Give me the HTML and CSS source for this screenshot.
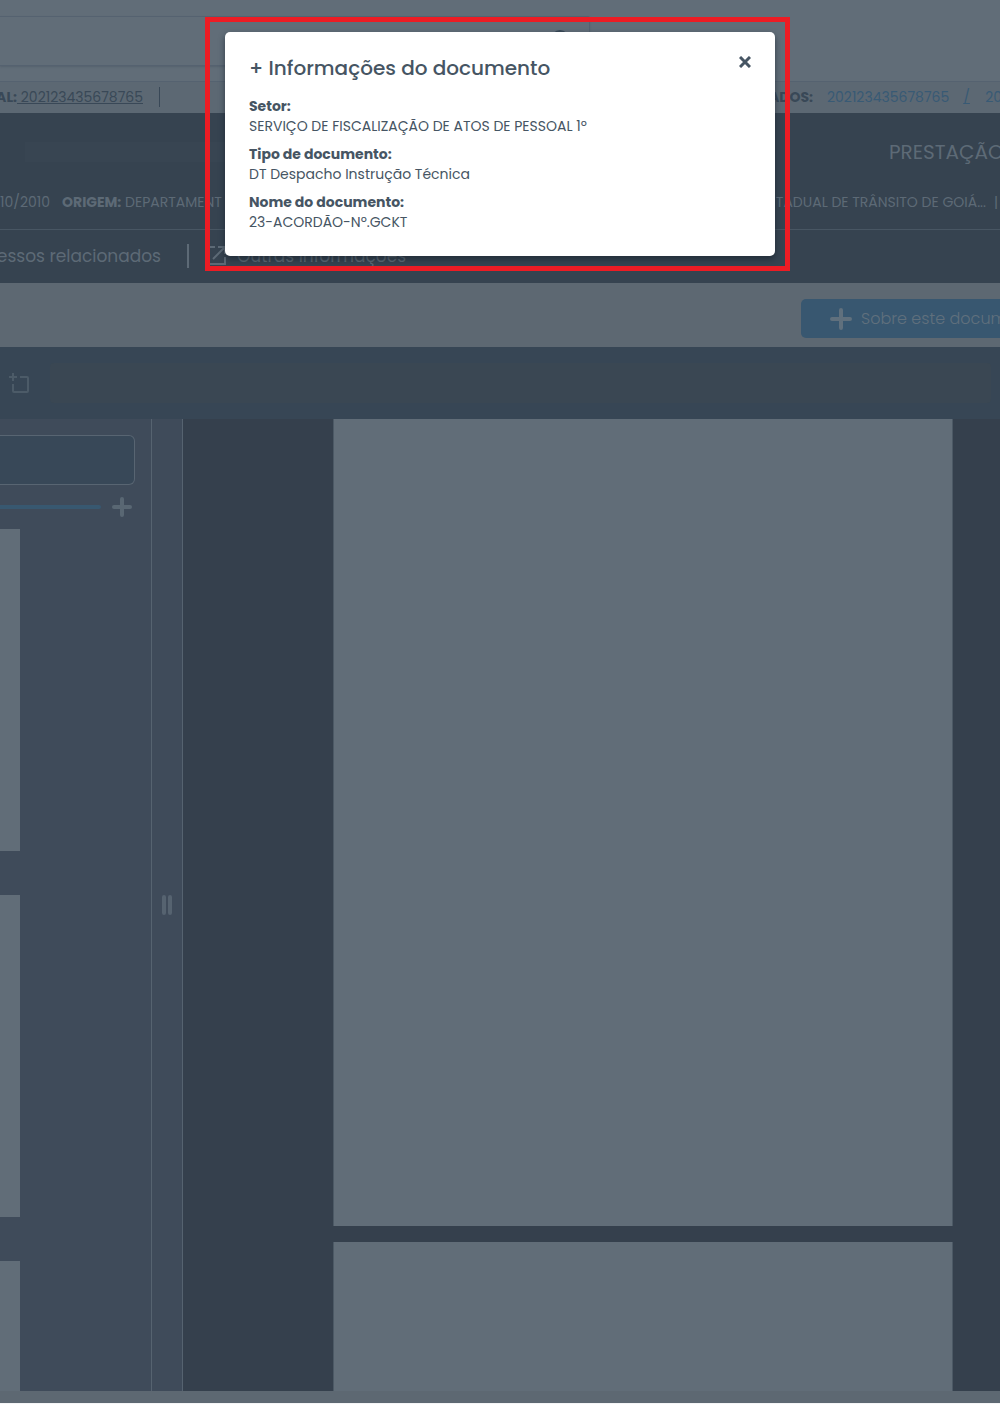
FILE: index.html
```html
<!DOCTYPE html>
<html lang="pt-BR">
<head>
<meta charset="utf-8">
<meta name="viewport" content="width=device-width, initial-scale=1">
<title>Informações do documento</title>
<link rel="stylesheet" href="styles.css">
</head>
<body>
<div class="app">
  <header class="topbar">
    <div class="search">
      <svg class="search-icon" viewBox="0 0 20 20" aria-hidden="true"><circle cx="9" cy="9" r="8"/><path d="M15 15l4 4"/></svg>
    </div>
  </header>

  <nav class="links">
    <div class="links-main"><b>AL:</b><a href="#principal">&nbsp;202123435678765</a></div>
    <span class="links-rule"></span>
    <div class="links-related">
      <b>APENSADOS:</b>
      <a class="blue" href="#p1">202123435678765</a>
      <a class="blue slash" href="#p2">/</a>
      <a class="blue" href="#p3">202123435678765</a>
    </div>
  </nav>

  <section class="process">
    <div class="process-title"><span class="placeholder"></span><h1>PRESTAÇÃO DE CONTAS</h1></div>
    <div class="process-meta">
      <span class="meta-date">10/2010</span>
      <span class="meta-origin"><b>ORIGEM:</b> DEPARTAMENT</span>
      <span class="meta-party">TADUAL DE TRÂNSITO DE GOIÁ...</span>
      <span class="meta-end">|</span>
    </div>
    <div class="tabs">
      <a class="tab-related" href="#relacionados">Processos relacionados</a>
      <span class="tabs-rule"></span>
      <a class="tab-other" href="#outras">
        <svg viewBox="0 0 20 20" aria-hidden="true"><path d="M8 1H2v17h16v-7M11 1h7v7M18 1L6 13"/></svg>
        Outras informações
      </a>
    </div>
  </section>

  <div class="actions">
    <button class="about" type="button">
      <svg viewBox="0 0 22 22" aria-hidden="true"><path d="M11 2v18M2 11h18"/></svg>
      Sobre este documento
    </button>
  </div>

  <div class="toolbar">
    <button class="crop" type="button" aria-label="Selecionar área">
      <svg viewBox="0 0 22 22" aria-hidden="true"><path d="M5 1v8M1 5h8M5 12v7a1 1 0 0 0 1 1h13a1 1 0 0 0 1-1V6a1 1 0 0 0-1-1h-7"/></svg>
    </button>
    <span class="toolbar-field"></span>
  </div>

  <main class="workspace">
    <aside class="sidebar">
      <div class="sidebar-box"></div>
      <div class="zoom">
        <span class="zoom-track"></span>
        <button type="button" aria-label="Ampliar"><svg viewBox="0 0 22 22" aria-hidden="true"><path d="M11 3v16M3 11h16"/></svg></button>
      </div>
      <div class="thumbs"><div class="thumb"></div><div class="thumb"></div><div class="thumb thumb-last"></div></div>
    </aside>
    <div class="splitter"><span></span><span></span></div>
    <section class="viewer"><div class="sheet"></div><div class="sheet sheet-last"></div></section>
  </main>
  <footer class="footer"></footer>
</div>

<div class="overlay">
  <section class="dialog" role="dialog" aria-modal="true" aria-labelledby="dialog-title">
    <div class="dialog-head">
      <h2 id="dialog-title">+ Informações do documento</h2>
      <button class="close" type="button" aria-label="Fechar"><svg viewBox="0 0 12 12" aria-hidden="true"><path d="M1 1l10 10M11 1l-10 10"/></svg></button>
    </div>
    <dl>
      <div><dt>Setor:</dt><dd>SERVIÇO DE FISCALIZAÇÃO DE ATOS DE PESSOAL 1º</dd></div>
      <div><dt>Tipo de documento:</dt><dd>DT Despacho Instrução Técnica</dd></div>
      <div><dt>Nome do documento:</dt><dd>23-ACORDÃO-Nº.GCKT</dd></div>
    </dl>
  </section>
</div>
</body>
</html>
```
FILE: styles.css
```css
* { box-sizing: border-box; }
body {
  margin: 0;
  background: #f4f5f6;
  color: #465563;
  font: 14px/20px Poppins, Inter, "Open Sans", sans-serif;
}
h1, h2, dl, dd { margin: 0; font-weight: 400; }
a { color: inherit; text-decoration: none; }
button { margin: 0; padding: 0; border: 0; background: none; color: inherit; font: inherit; }
svg { display: block; flex: none; fill: none; stroke: currentColor; }

.app {
  display: flex;
  flex-direction: column;
  min-height: 100vh;
  padding-bottom: 1px;
  overflow: hidden;
  white-space: nowrap;
}

.topbar { height: 82px; padding-top: 16px; background: #616d78; border-bottom: 1px solid #556270; }
.search {
  display: flex;
  justify-content: flex-end;
  width: 59%;
  height: 50px;
  padding: 13px 18px;
  border: 1px solid #556270;
  border-left: 0;
  border-radius: 0 2px 2px 0;
  box-shadow: 0 1px 2px #56626e;
}
.search-icon { width: 20px; height: 20px; color: #394857; stroke-width: 2; }

.links { display: flex; align-items: center; height: 31px; padding-bottom: 2px; background: #5c6873; color: #394857; }
.links-main { display: flex; justify-content: flex-end; width: 143px; overflow: hidden; }
.links-main a { text-decoration: underline; }
.links-rule { width: 1px; height: 20px; margin-left: 16px; background: #394857; }
.links-related { display: flex; gap: 14px; width: 278px; margin-left: auto; overflow: hidden; }
.links-related > * { flex: none; }
.links-related b { width: 91px; text-align: right; }
.blue { color: #385a75; }
.slash { width: 8px; text-decoration: underline; }

.process { background: #364350; color: #5d6a76; }
.process-title { display: flex; align-items: center; height: 78px; }
.placeholder { flex: 1; height: 20px; margin: 0 114px 0 25px; background: #384552; }
h1 { width: 111px; overflow: hidden; font-size: 20px; line-height: 28px; }
.process-meta { display: flex; align-items: center; height: 39px; padding-bottom: 16px; border-bottom: 1px solid #485663; }
.meta-date { width: 62px; }
.meta-origin { width: 172px; overflow: hidden; }
.meta-party { display: flex; justify-content: flex-end; width: 260px; margin-left: auto; }
.meta-end { width: 14px; padding-left: 8px; }
.tabs { display: flex; align-items: center; height: 53px; padding-bottom: 2px; font-size: 17px; }
.tab-related { display: flex; justify-content: flex-end; width: 161px; overflow: hidden; }
.tabs-rule { width: 2px; height: 24px; margin: 0 18px 0 26px; background: #5d6a76; }
.tab-other { display: flex; align-items: center; gap: 10px; }
.tab-other svg { width: 20px; height: 20px; stroke-width: 2; }

.actions { display: flex; justify-content: flex-end; height: 64px; padding-top: 16px; background: #5d6872; }
.about {
  display: flex;
  align-items: center;
  gap: 9px;
  width: 199px;
  height: 39px;
  padding-left: 29px;
  overflow: hidden;
  border-radius: 5px 0 0 5px;
  background: #385770;
  color: #60707d;
  font-size: 16px;
  font-weight: 300;
}
.about svg { width: 22px; height: 22px; stroke-width: 4; stroke-linecap: round; }

.toolbar { display: flex; align-items: center; gap: 20px; height: 72px; padding: 0 9px 0 8px; background: #374655; }
.crop { color: #4c5b68; }
.crop svg { width: 22px; height: 22px; stroke-width: 2; }
.toolbar-field { flex: 1; height: 40px; border-radius: 4px; background: #3a4753; }

.workspace { display: flex; flex: 1; background: #35404d; }
.sidebar { display: flex; flex-direction: column; width: 151px; padding-top: 16px; background: #3f4b5a; }
.sidebar-box { height: 50px; margin-right: 16px; border: 1px solid #586572; border-left: 0; border-radius: 0 6px 6px 0; background: #384858; }
.zoom { display: flex; align-items: center; gap: 10px; height: 44px; padding-right: 18px; }
.zoom-track { flex: 1; height: 4px; border-radius: 0 2px 2px 0; background: #385870; }
.zoom button { color: #596773; }
.zoom svg { width: 22px; height: 22px; stroke-width: 4; stroke-linecap: round; }
.thumbs { display: flex; flex: 1; flex-direction: column; gap: 44px; }
.thumb { width: 20px; height: 322px; background: #616d78; }
.thumb-last { flex: 1; height: auto; min-height: 120px; }
.splitter { display: flex; align-items: center; justify-content: center; gap: 2px; width: 32px; border: 1px solid #566370; border-width: 0 1px; background: #3f4b5a; }
.splitter span { width: 4px; height: 20px; border-radius: 2px; background: #566370; }
.viewer { display: flex; flex: 1; flex-direction: column; gap: 16px; padding: 0 47px 0 150px; }
.sheet { height: 807px; border: 1px solid #4c5965; border-width: 0 1px; background: #616d78; }
.sheet-last { flex: 1; height: auto; min-height: 120px; }
.zoom, .thumb, .sheet { flex-shrink: 0; }
.footer { height: 12px; background: #5d6872; }

.overlay { position: absolute; inset: 32px 0 auto; display: flex; justify-content: center; }
.dialog {
  position: relative;
  width: 550px;
  max-width: 90%;
  padding: 24px;
  border-radius: 5px;
  background: #fff;
  box-shadow: 0 3px 6px rgba(20, 30, 40, .6);
}
.dialog::after { content: ""; position: absolute; inset: -15px -15px -15px -20px; border: 5px solid #ed1c24; pointer-events: none; }
.dialog-head { display: flex; justify-content: space-between; margin-bottom: 16px; }
h2 { font-size: 20px; line-height: 24px; font-weight: 500; }
.close { display: flex; width: 12px; height: 12px; }
.close svg { width: 12px; height: 12px; stroke-width: 3; }
dl { display: flex; flex-direction: column; gap: 8px; }
dt, b { font-weight: 700; }
```
